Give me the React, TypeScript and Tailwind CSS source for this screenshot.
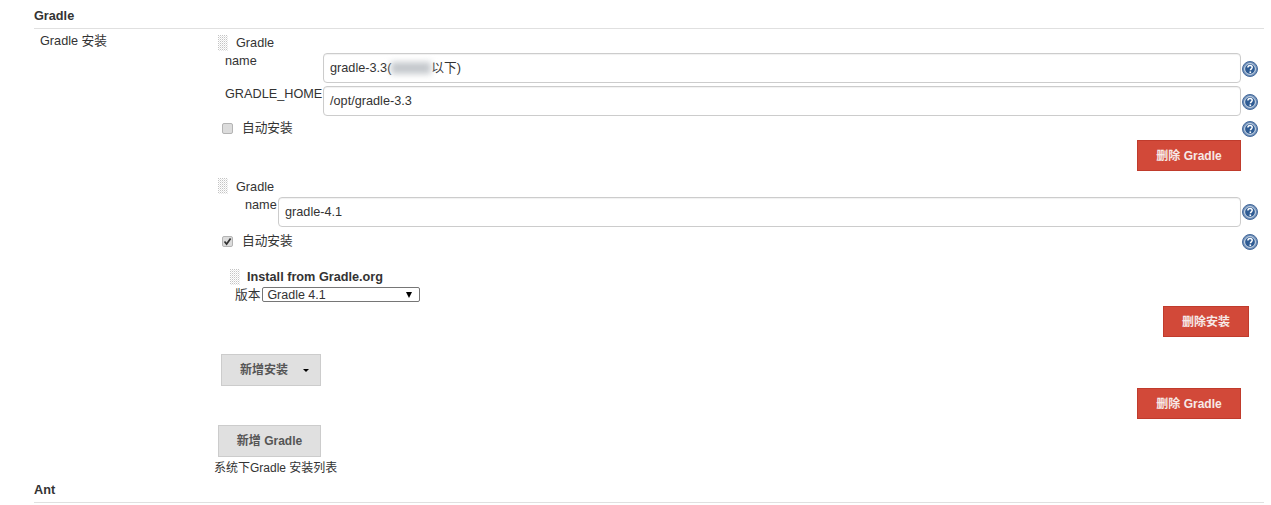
import React from "react";

const font = "font-['Liberation_Sans','Noto_Sans_CJK_SC',sans-serif]";

function Help() {
  return (
    <svg className="w-[16px] h-[16px] shrink-0" viewBox="0 0 16 16">
      <circle cx="8" cy="8" r="7.5" fill="#6f8fb8" stroke="#44699b" strokeWidth="1" />
      <circle cx="8" cy="8" r="5.4" fill="#2f5c94" stroke="#d5dfeb" strokeWidth="1" />
      <path d="M5.9 6.4c0-1.3 1-2 2.2-2s2.1.8 2.1 1.9c0 1.5-1.8 1.6-1.8 3" fill="none" stroke="#fff" strokeWidth="1.5" />
      <rect x="7.5" y="10.4" width="1.6" height="1.6" fill="#fff" />
    </svg>
  );
}

// dotted drag handle
function Grip() {
  return (
    <svg className="w-[10px] h-[16px] shrink-0" viewBox="0 0 10 16">
      <defs>
        <pattern id="grip" width="2" height="2" patternUnits="userSpaceOnUse">
          <rect width="1" height="1" fill="#c4c4c4" />
          <rect x="1" y="1" width="1" height="1" fill="#e6e6e6" />
        </pattern>
      </defs>
      <rect width="10" height="16" fill="url(#grip)" />
    </svg>
  );
}

function Check({ checked }: { checked?: boolean }) {
  return (
    <span className="relative w-[11px] h-[11px] ml-[4px] shrink-0">
      <input
        type="checkbox"
        readOnly
        checked={!!checked}
        className="appearance-none block w-[11px] h-[11px] rounded-[2px] bg-[#dcdcdc] border border-[#b4b4b4]"
      />
      {checked && (
        <svg className="absolute left-[1px] top-[1px] w-[9px] h-[9px]" viewBox="0 0 9 9">
          <path d="M1.5 4.5 3.6 7 7.6 1.5" fill="none" stroke="#333" strokeWidth="1.7" />
        </svg>
      )}
    </span>
  );
}

function TextBox({ children }: { children: React.ReactNode }) {
  return (
    <div className="flex-1 h-[30px] flex items-center pl-[6px] border border-[#cccccc] rounded-[4px] text-[12.7px] text-[#333] shadow-[inset_0_1px_1px_rgba(0,0,0,0.06)]">
      {children}
    </div>
  );
}

function RedButton({ children, w }: { children: React.ReactNode; w: string }) {
  return (
    <div className={`${w} h-[31px] flex items-center justify-center bg-[#d24939] border border-[#c03b2c] text-[12px] font-bold text-[#f6e9e7]`}>
      {children}
    </div>
  );
}

export default function App() {
  return (
    <div className={`${font} w-[1271px] h-[505px] overflow-hidden bg-white text-[#333] text-[12.7px] leading-[16px] pl-[34px] pr-[7px]`}>
      <div className="h-[29px] pt-[8px] border-b border-[#e0e0e0] font-bold">Gradle</div>

      <div className="flex">
        <div className="w-[184px] pl-[6px] pt-[4px] shrink-0">Gradle 安装</div>

        <div className="flex-1">
          {/* first installer */}
          <div className="flex items-center h-[16px] mt-[6px]">
            <Grip />
            <span className="ml-[8px]">Gradle</span>
          </div>
          <div className="flex h-[30px] mt-[2px]">
            <div className="w-[105px] pl-[7px] shrink-0">name</div>
            <TextBox>
              <span>gradle-3.3(</span>
              <span className="w-[40px] h-[12px] bg-[#c4c8cc] blur-[3px]" />
              <span>以下)</span>
            </TextBox>
            <div className="w-[23px] pl-[1px] pt-[8px]"><Help /></div>
          </div>
          <div className="flex h-[30px] mt-[3px]">
            <div className="w-[105px] pl-[7px] shrink-0">GRADLE_HOME</div>
            <TextBox>/opt/gradle-3.3</TextBox>
            <div className="w-[23px] pl-[1px] pt-[8px]"><Help /></div>
          </div>
          <div className="flex items-center h-[16px] mt-[4px]">
            <Check />
            <span className="ml-[9px]">自动安装</span>
            <div className="ml-auto w-[23px] pl-[1px] pt-[2px]"><Help /></div>
          </div>
          <div className="flex justify-end pr-[23px] mt-[4px]">
            <RedButton w="w-[104px]">删除 Gradle</RedButton>
          </div>

          {/* second installer */}
          <div className="flex items-center h-[16px] mt-[7px]">
            <Grip />
            <span className="ml-[8px] mt-[1px]">Gradle</span>
          </div>
          <div className="flex h-[30px] mt-[3px]">
            <div className="w-[60px] pl-[27px] shrink-0">name</div>
            <TextBox>gradle-4.1</TextBox>
            <div className="w-[23px] pl-[1px] pt-[7px]"><Help /></div>
          </div>
          <div className="flex items-center h-[16px] mt-[6px]">
            <Check checked />
            <span className="ml-[9px]">自动安装</span>
            <div className="ml-auto w-[23px] pl-[1px] pt-[2px]"><Help /></div>
          </div>

          <div className="pl-[12px] mt-[20px]">
            <div className="flex items-center h-[16px]">
              <Grip />
              <span className="ml-[7px] font-bold">Install from Gradle.org</span>
            </div>
            <div className="flex items-center h-[15px] mt-[2px] pl-[5px]">
              <span>版本</span>
              <div className="ml-[2px] w-[158px] h-[15px] flex items-center justify-between border border-[#767676] rounded-[2px] pl-[4px] pr-[7px] text-[12.5px]">
                <span>Gradle 4.1</span>
                <span className="w-0 h-0 border-l-[3.5px] border-r-[3.5px] border-t-[6px] border-l-transparent border-r-transparent border-t-black" />
              </div>
            </div>
          </div>
          <div className="flex justify-end pr-[15px] mt-[4px]">
            <RedButton w="w-[86px]">删除安装</RedButton>
          </div>

          <div className="ml-[3px] mt-[17px] w-[100px] h-[32px] flex items-center bg-[#e0e0e0] border border-[#cccccc] text-[12px] font-bold text-[#555] pl-[18px]">
            新增安装
            <span className="ml-[15px] w-0 h-0 border-l-[3px] border-r-[3px] border-t-[3px] border-l-transparent border-r-transparent border-t-black" />
          </div>
          <div className="flex justify-end pr-[23px] mt-[2px]">
            <RedButton w="w-[104px]">删除 Gradle</RedButton>
          </div>

          <div className="mt-[6px] w-[103px] h-[32px] flex items-center justify-center bg-[#e0e0e0] border border-[#cccccc] text-[12px] font-bold text-[#555]">
            新增 Gradle
          </div>
          <div className="-ml-[4px] mt-[3px] text-[12px]">系统下Gradle 安装列表</div>
        </div>
      </div>

      <div className="h-[21px] mt-[6px] border-b border-[#e0e0e0] font-bold">Ant</div>
    </div>
  );
}
